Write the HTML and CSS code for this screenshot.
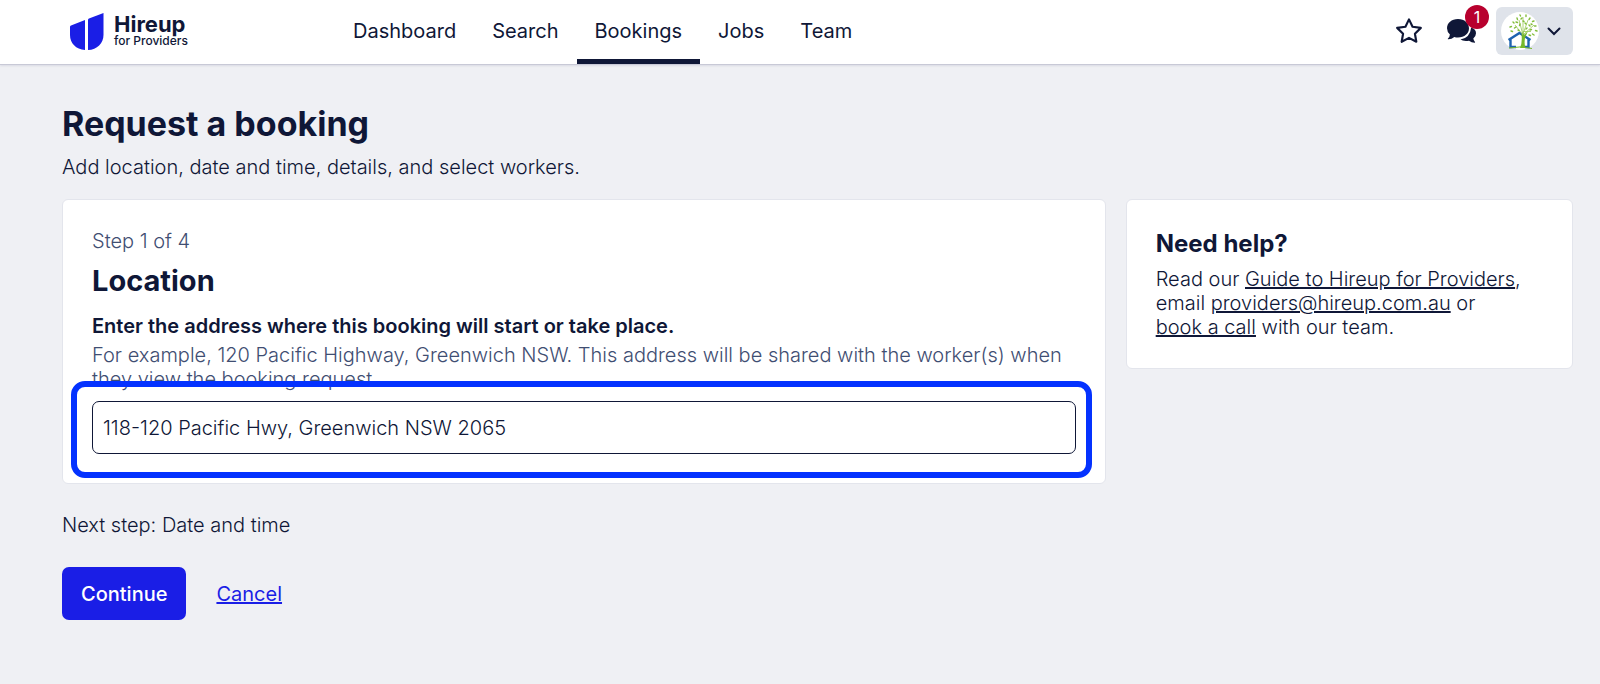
FILE: index.html
```html
<!DOCTYPE html>
<html lang="en">
<head>
<meta charset="utf-8">
<title>Request a booking</title>
<link rel="stylesheet" href="styles.css">
</head>
<body>
<header class="topbar">
  <a class="brand" href="#">
    <svg class="brand-mark" viewBox="0 0 34 37" aria-hidden="true">
      <path d="M0 14Q0 13 1 12.600L15 7V37C6 36.500 0 30 0 22Z"/>
      <path d="M18 7Q18 6 19 5.600L33.500 0V22C33.500 30 27 37 18 37Z"/>
    </svg>
    <span class="brand-text">
      <span class="brand-name">Hireup</span>
      <span class="brand-sub">for Providers</span>
    </span>
  </a>
  <nav class="nav">
    <a class="nav-link" href="#">Dashboard</a>
    <a class="nav-link" href="#">Search</a>
    <a class="nav-link nav-link-active" href="#" aria-current="page">Bookings</a>
    <a class="nav-link" href="#">Jobs</a>
    <a class="nav-link" href="#">Team</a>
  </nav>
  <div class="tools">
    <button class="icon-button" type="button" aria-label="Favourites">
      <svg class="star" viewBox="0 0 26 26" aria-hidden="true"><path d="M13 2.200L16.300 9L24 10.100L18.500 15.500L19.800 23L13 19.400L6.200 23L7.500 15.500L2 10.100L9.700 9Z"/></svg>
    </button>
    <button class="icon-button" type="button" aria-label="Messages">
      <svg class="chat" viewBox="0 0 30 24" aria-hidden="true">
        <path d="M11 0C17.500 0 22 4 22 9.300S17.500 18.500 11 18.500Q9 18.500 7.300 18Q4.500 20.500 1 20.300Q.500 20 1 19.500Q2.800 17.500 2.900 15.400Q0 12.800 0 9.300C0 4 4.500 0 11 0Z"/>
        <path d="M24.200 8.500Q29 10 29 14.300Q29 17.300 26.300 19.500Q26.600 21.300 28 23Q28.300 23.500 27.700 23.700Q24.500 23.700 22 21.700Q16 22.500 13.500 20.500Q23 19 24.200 8.500Z"/>
      </svg>
      <span class="badge">1</span>
    </button>
    <button class="account" type="button" aria-label="Account menu">
      <svg class="avatar" viewBox="0 0 38 38" aria-hidden="true">
        <circle cx="19" cy="19" r="19" fill="#fff"/>
        <path d="M7.500 28L18.500 21L29.500 28M9.500 27V35H15M27.500 27V35H24" fill="none" stroke="#1d62b0" stroke-width="2.400"/>
        <path d="M8 36Q20 33.500 31 36.500" fill="none" stroke="#76b82a" stroke-width="1"/>
        <path d="M19 36Q21.500 31 20.500 22L22 20L23 23L27 19L24 26Q23 32 24.500 36Z" fill="#76b82a"/>
        <path d="M22 23L14 13M22 23L18 8M22 22V5M22 22L27 8M23 22L33 13M22 19.500H30" fill="none" stroke="#97c653" stroke-width=".8"/>
        <path d="M9 15l1.500-.5M12 10l1 1M16 6l.5 1.500M20 7l1-1M25 3v1.500M29 6l-1 1.500M33 9l-1.500.5M35 14l-1.500 0M36 19l-1.500-.5M33 23l-1.500-1M28 13l1 1M24 11l1 1M19 12l-.5 1.500M15 15l-1.500 1M10 19l1.500.5M15 10l1.500.5M29 18l1.500-.5M25 17l1-1M22 9l1 .5M30 12l1 .5M28 23l1.500.5M17 18l1 .5M19 3l.5 1" fill="none" stroke="#83bd3b" stroke-width="1.400" stroke-linecap="round"/>
      </svg>
      <svg class="chevron" viewBox="0 0 14 9" aria-hidden="true"><path d="M1.500 1.500L7 7L12.500 1.500"/></svg>
    </button>
  </div>
</header>

<main class="page">
  <h1 class="title">Request a booking</h1>
  <p class="lead">Add location, date and time, details, and select workers.</p>
  <div class="columns">
    <section class="card">
      <p class="step">Step 1 of 4</p>
      <h2 class="card-title">Location</h2>
      <label class="label" for="address">Enter the address where this booking will start or take place.</label>
      <p class="hint" id="address-hint">For example, 120 Pacific Highway, Greenwich NSW. This address will be shared with the worker(s) when they view the booking request.</p>
      <div class="field">
        <input class="input" id="address" type="text" value="118-120 Pacific Hwy, Greenwich NSW 2065" aria-describedby="address-hint">
      </div>
    </section>
    <aside class="card">
      <h2 class="help-title">Need help?</h2>
      <p class="help-text">Read our <a href="#">Guide to Hireup for Providers</a>, email <a href="#">providers@hireup.com.au</a> or <br><a href="#">book a call</a> with our team.</p>
    </aside>
  </div>
  <p class="next">Next step: Date and time</p>
  <div class="actions">
    <button class="continue" type="button">Continue</button>
    <a class="cancel" href="#">Cancel</a>
  </div>
</main>
</body>
</html>
```

FILE: styles.css
```css
* {
  box-sizing: border-box;
}

body {
  margin: 0;
  min-height: 100vh;
  background: #eff0f4;
  color: #0f1737;
  font: 300 20px/24px Inter, "Liberation Sans", sans-serif;
}

h1,
h2,
p {
  margin: 0;
}

a {
  color: inherit;
}

button,
input {
  color: inherit;
  font: inherit;
}

.topbar {
  display: flex;
  align-items: center;
  height: 65px;
  padding: 0 27px 2px 70px;
  background: #fff;
  border-bottom: 1px solid #c8c9d6;
  box-shadow: 0 1px 2px #d9dae4;
}

.brand {
  display: flex;
  align-items: center;
  gap: 10px;
  width: 265px;
  text-decoration: none;
}

.brand-mark {
  width: 34px;
  height: 37px;
  fill: #1a1ee6;
}

.brand-text {
  display: flex;
  flex-direction: column;
}

.brand-name {
  font-size: 22px;
  font-weight: 700;
  line-height: 20px;
}

.brand-sub {
  font-size: 12px;
  font-weight: 500;
  line-height: 14px;
}

.nav {
  display: flex;
  align-self: stretch;
  margin-bottom: -2px;
}

.nav-link {
  display: flex;
  align-items: center;
  padding: 3px 18px 0;
  border-bottom: 5px solid transparent;
  font-weight: 400;
  text-decoration: none;
}

.nav-link-active {
  border-color: #0f1737;
}

.tools {
  display: flex;
  align-items: center;
  gap: 24px;
  margin-left: auto;
}

.icon-button {
  position: relative;
  display: flex;
  padding: 0;
  background: none;
  border: 0;
}

.star {
  width: 28px;
  height: 28px;
  fill: none;
  stroke: #0f1737;
  stroke-width: 2;
  stroke-linejoin: round;
}

.chat {
  width: 30px;
  height: 24px;
  fill: #0f1737;
}

.badge {
  position: absolute;
  top: -14px;
  right: -12px;
  width: 24px;
  height: 24px;
  border-radius: 50%;
  background: #b8002e;
  color: #fff;
  font-size: 16px;
  font-weight: 400;
  text-align: center;
}

.account {
  display: flex;
  align-items: center;
  gap: 8px;
  height: 48px;
  margin-left: -5px;
  padding: 0 12px 0 5px;
  background: #dfe3ea;
  border: 0;
  border-radius: 6px;
}

.avatar {
  width: 38px;
  height: 38px;
}

.chevron {
  width: 14px;
  height: 9px;
  fill: none;
  stroke: #0f1737;
  stroke-width: 2;
  stroke-linecap: round;
}

.page {
  padding: 39px 27px 40px 62px;
}

.title {
  font-size: 34px;
  font-weight: 700;
  line-height: 40px;
}

.lead {
  margin: 11px 0 20px;
}

.columns {
  display: grid;
  grid-template-columns: 7fr 3fr;
  align-items: start;
  gap: 20px;
}

.card {
  padding: 29px;
  background: #fff;
  border: 1px solid #e3e5ec;
  border-radius: 6px;
}

.step,
.hint {
  color: #3f4e72;
}

.card-title {
  margin: 10px 0 15px;
  font-size: 29px;
  font-weight: 700;
  line-height: 36px;
}

.label {
  display: block;
  margin-bottom: 5px;
  font-weight: 600;
}

.field {
  position: relative;
  margin-top: 10px;
}

.field::after {
  content: "";
  position: absolute;
  inset: -20px -16px -24px -21px;
  border: 6px solid #0432ff;
  border-radius: 14px;
  pointer-events: none;
}

.input {
  display: block;
  width: 100%;
  height: 53px;
  padding: 0 10px;
  background: #fff;
  border: 1px solid #0f1737;
  border-radius: 7px;
}

.help-title {
  margin-bottom: 8px;
  font-size: 24px;
  font-weight: 700;
  line-height: 30px;
}

.next {
  margin: 29px 0 30px;
}

.actions {
  display: flex;
  align-items: center;
  gap: 30px;
}

.continue {
  height: 53px;
  padding: 0 19px;
  background: #1a1ee6;
  border: 0;
  border-radius: 7px;
  color: #fff;
  font-weight: 500;
}

.cancel {
  color: #1a1ee6;
  font-weight: 400;
}
```
